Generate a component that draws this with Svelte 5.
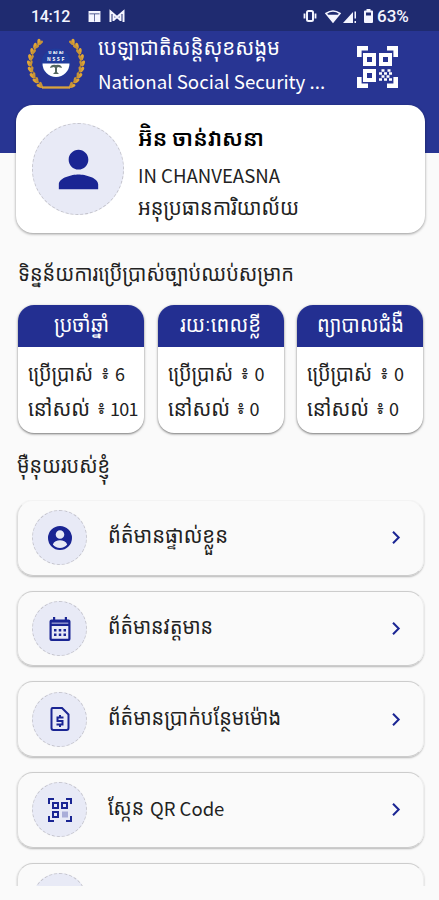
<script>
    const leave = [
        { title: 'ប្រចាំឆ្នាំ', used: 6, left: 101, width: 55 },
        { title: 'រយៈពេលខ្លី', used: 0, left: 0, width: 81 },
        { title: 'ព្យាបាលជំងឺ', used: 0, left: 0, width: 87 }
    ];

    const menu = [
        { id: 'profile', title: 'ព័ត៌មានផ្ទាល់ខ្លួន', width: 120 },
        { id: 'calendar', title: 'ព័ត៌មានវត្តមាន', width: 105 },
        { id: 'money', title: 'ព័ត៌មានប្រាក់បន្ថែមម៉ោង', width: 173 },
        { id: 'qr', title: 'ស្កែន', suffix: 'QR Code', width: 36 },
        { id: 'more', title: '' }
    ];

    // Leaves of the left half of the wreath, mirrored for the right half
    const leaves = [
        [13, 3, 25], [9, 7, 35], [6, 12, 20], [4, 18, 10], [3, 24, 0],
        [4, 30, -10], [6, 36, -20], [9, 41, -30], [13, 46, -45]
    ];
</script>

{#snippet khmer(label, width)}
    <svg class="khmer" {width} height="36"><text y="25" textLength={width} lengthAdjust="spacingAndGlyphs">{label}</text></svg>
{/snippet}

<div class="screen">
    <div class="status">
        <span class="time">14:12</span>
        <svg class="news" viewBox="0 0 13 12" fill="currentColor">
            <path fill-rule="evenodd" d="M0 0h13v12H0zM1 2.7v.8h11v-.8zM6.3 3.5v8h.7v-8z" />
        </svg>
        <svg class="mail" viewBox="0 0 16 12">
            <path d="M1.5 12V1.5L8 7l6.5-5.500V12M4.500 11V5M11.500 11V5M4.500 10 8 7l3.500 3" fill="none" stroke="currentColor" stroke-width="2" />
        </svg>
        <span class="gap"></span>
        <svg class="vibrate" viewBox="0 0 16 12" fill="none" stroke="currentColor" stroke-width="2">
            <rect x="5" y="1" width="6" height="10" rx="1.5" />
            <path d="M2.500 3.500v5M13.500 3.500v5" stroke-width="1.800" />
        </svg>
        <svg class="wifi" viewBox="0 0 16 13" fill="none" stroke="currentColor" stroke-width="1.6">
            <path d="M1 3.5Q8-1.5 15 3.5L8 12z" />
            <path d="M4 5.5h8L8 11z" fill="currentColor" />
        </svg>
        <svg class="signal" viewBox="0 0 14 13" fill="currentColor">
            <path d="M0 13 10 2v11zM11.5 1.5H13v7h-1.5zM11.5 11H13v2h-1.5z" />
        </svg>
        <svg class="battery" viewBox="0 0 9 14" fill="currentColor">
            <path fill-rule="evenodd" d="M2.500 0h4v1.500H8q1 0 1 1V13q0 1-1 1H1q-1 0-1-1V2.500q0-1 1-1h1.500zM2 3.500v3h5v-3z" />
        </svg>
        <span class="percent">63%</span>
    </div>

    <header>
        <svg class="logo" viewBox="0 0 58 52">
            {#each [1, -1] as side}
                <g transform={side === 1 ? '' : 'translate(58 0) scale(-1 1)'}>
                    <path d="M13 3Q-6 24 16 49" fill="none" stroke="#a87c2c" stroke-width="1.3" />
                    {#each leaves as [x, y, turn]}
                        <g transform="translate({x} {y}) rotate({turn})">
                            <ellipse cx="-1" rx="1.7" ry="3.2" transform="rotate(-25)" fill="#e0a535" />
                            <ellipse cx="1" rx="1.4" ry="2.9" transform="rotate(25)" fill="#c79337" />
                        </g>
                    {/each}
                </g>
            {/each}
            <path d="M15 48.5h28" stroke="#d9a33c" stroke-width="2.3" />
            <circle cx="29" cy="24" r="14.5" fill="#203c9c" />
            <path d="M15.5 24.5h27a13.5 13.5 0 0 1-27 0z" fill="#fff" />
            <path d="M23 29q1-4 6-3 5-1 6 3l-4-1-1 1v4l2 2h-6l2-2v-4l-1-1z" fill="#53665e" />
            <text x="29" y="15" text-anchor="middle">ប ស ស</text>
            <text x="29.5" y="22" text-anchor="middle" letter-spacing="1.5">NSSF</text>
        </svg>
        <div class="org">
            {@render khmer('បេឡាជាតិសន្តិសុខសង្គម', 182)}
            <div class="org-en">National Social Security ...</div>
        </div>
        <svg class="scan" viewBox="0 0 41 42" fill="none" stroke="currentColor" stroke-width="4">
            <path d="M2.3 11V2.3H11M30 2.3h8.7V11M2.3 31v8.7H11M30 39.7h8.7V31" stroke-width="4.6" />
            <path d="M8 9h9v9H8zM24 9h9v9h-9zM8 25h9v9H8z" stroke="#283593" stroke-width="5" />
            <path d="M8 9h9v9H8zM24 9h9v9h-9zM8 25h9v9H8z" />
            <path d="M24.500 24.500h3m3 0h3M22 27.500h3m2 0h3m2 0h3M24.500 30.500h3m2 0h3M22 33.500h3m2 0h3m2 0h3" stroke-width="2.600" />
        </svg>
    </header>

    <section class="profile">
        <div class="avatar">
            <svg viewBox="0 0 24 24" fill="currentColor">
                <path d="M12 12c2.210 0 4-1.790 4-4s-1.790-4-4-4-4 1.790-4 4 1.790 4 4 4zm0 2c-2.670 0-8 1.340-8 4v2h16v-2c0-2.660-5.330-4-8-4z" />
            </svg>
        </div>
        <div class="who">
            <div class="name">{@render khmer('អ៊\u200Cិន ចាន់វាសនា', 126)}</div>
            <div class="latin">IN CHANVEASNA</div>
            {@render khmer('អនុប្រធានការិយាល័យ', 161)}
        </div>
    </section>

    <h2>{@render khmer('ទិន្នន័យការប្រើប្រាស់ច្បាប់ឈប់សម្រាក', 276)}</h2>

    <div class="cards">
        {#each leave as item}
            <div class="card">
                <div class="card-head">{@render khmer(item.title, item.width)}</div>
                <div class="line">{@render khmer('ប្រើប្រាស់', 65)}<span class="mark">៖</span>{item.used}</div>
                <div class="line">{@render khmer('នៅសល់', 62)}<span class="mark">៖</span>{item.left}</div>
            </div>
        {/each}
    </div>

    <h2 class="menu-title">{@render khmer('ម៉ឺនុយរបស់ខ្ញុំ', 93)}</h2>

    <div class="menu">
        {#each menu as item, i}
            <div class="row" class:first={i === 0}>
                <div class="icon">
                    {#if item.id === 'profile'}
                        <svg viewBox="0 0 24 24" fill="currentColor">
                            <path fill-rule="evenodd" d="M12 0a12 12 0 1 0 0 24 12 12 0 0 0 0-24zm0 4.200a4.300 4.300 0 1 1 0 8.600 4.300 4.300 0 0 1 0-8.600zM4.800 18.500c1-2.800 4.300-4.200 7.200-4.200s6.200 1.400 7.200 4.200C17.500 20.800 15 22 12 22s-5.500-1.200-7.200-3.500z" />
                        </svg>
                    {:else if item.id === 'calendar'}
                        <svg viewBox="0 0 24 24" fill="currentColor">
                            <path fill-rule="evenodd" d="M5 0h2.200v2.500h9.600V0H19v2.500h1.500q2 0 2 2V22q0 2-2 2h-17q-2 0-2-2V4.500q0-2 2-2H5zM3.700 9v12.700h16.600V9z" />
                            <path d="M6 12h2.500v2.500H6zM10.750 12h2.500v2.500h-2.500zM15.500 12H18v2.500h-2.500zM6 16.500h2.500V19H6zM10.750 16.500h2.500V19h-2.500zM15.500 16.500H18V19h-2.500z" />
                            <path d="M3.700 6.200h16.600" stroke="#8c91cc" stroke-width="1.5" />
                        </svg>
                    {:else if item.id === 'money'}
                        <svg viewBox="0 0 24 24" fill="none" stroke="currentColor" stroke-width="2">
                            <path d="M4.500 1H14l6.500 6.500V21q0 2-2 2h-13q-2 0-2-2V3q0-2 1-2z" />
                            <path d="M15.500 10.500h-6v3.400h5V17.500H8.500M12 8v2.500M12 17.500V20" />
                        </svg>
                    {:else if item.id === 'qr'}
                        <svg viewBox="0 0 24 24" fill="none" stroke="currentColor" stroke-width="2">
                            <path d="M1 6V1h5M18 1h5v5M1 18v5h5M18 23h5v-5M5 5h5v5H5zM14 5h5v5h-5zM5 14h5v5H5z" />
                            <path d="M14 15h6M14 18h6" stroke-width="3" opacity=".3" />
                        </svg>
                    {/if}
                </div>
                {#if item.title}
                    <div class="label">{@render khmer(item.title, item.width)}<span>{item.suffix}</span></div>
                {/if}
                <svg class="chevron" viewBox="0 0 8 13" fill="none" stroke="currentColor" stroke-width="2">
                    <path d="M1 .7l5.7 5.8L1 12.3" />
                </svg>
            </div>
        {/each}
    </div>
</div>

<style>
    :global(body) {
        background: #fafafa;
    }

    .screen {
        box-sizing: border-box;
        height: 900px;
        overflow: hidden;
        color: #222;
        background: linear-gradient(#283593 153px, #fafafa 153px);
        font-family: "Noto Sans CJK SC", "Noto Sans Khmer", "Khmer OS", "DejaVu Sans", sans-serif;
        font-size: 19px;
    }

    svg {
        display: block;
        flex: none;
        overflow: visible;
    }

    text {
        fill: currentColor;
    }

    .khmer {
        font-size: 22px;
    }

    .status {
        display: flex;
        align-items: center;
        box-sizing: border-box;
        height: 31px;
        padding: 1px 28px 0 31px;
        background: #1f2b70;
        color: #f4f5ff;
        font-family: Roboto, sans-serif;
        font-size: 16px;
        font-weight: 500;
    }

    .time { width: 57px; letter-spacing: -0.3px; }
    .news { width: 13px; height: 11px; }
    .mail { width: 16px; height: 12px; margin-left: 8px; }
    .gap { flex: 1; }
    .vibrate { width: 16px; height: 12px; margin-right: 7px; }
    .wifi { width: 16px; height: 13px; margin-right: 2px; }
    .signal { width: 14px; height: 13px; margin-right: 7px; }
    .battery { width: 9px; height: 14px; margin-right: 4px; }
    .percent { width: 34px; font-size: 17px; }

    header {
        display: flex;
        height: 74px;
        padding-left: 27px;
        color: #fff;
    }

    .logo {
        width: 58px;
        height: 52px;
        margin-top: 8px;
        font-size: 5px;
        font-weight: 700;
    }

    .org {
        width: 227px;
        margin-left: 13px;
    }

    .org .khmer {
        margin-top: -1px;
    }

    .org-en {
        line-height: 29px;
        font-size: 18.7px;
        white-space: nowrap;
    }

    .scan {
        width: 41px;
        height: 42px;
        margin: 15px 0 0 32px;
    }

    .profile {
        display: flex;
        box-sizing: border-box;
        height: 128px;
        margin: 0 14px 0 16px;
        padding: 18px 16px;
        border-radius: 17px;
        background: #fff;
        box-shadow: 0 1px 3px rgba(0, 0, 0, 0.4);
    }

    .avatar, .icon {
        display: grid;
        place-items: center;
        box-sizing: border-box;
        flex: none;
        border: 1px dashed #c5c5ce;
        border-radius: 50%;
        background: #e8eaf6;
        color: #1a2593;
    }

    .avatar {
        width: 92px;
        height: 92px;
    }

    .avatar svg {
        width: 59px;
        height: 59px;
    }

    .who {
        margin: -2px 0 0 14px;
    }

    .name {
        height: 37px;
        color: #000;
        font-weight: 600;
    }

    .latin {
        height: 32px;
        line-height: 33px;
        font-size: 18.6px;
    }

    h2 {
        height: 40px;
        margin: 23px 0 9px 18px;
        font-size: 20px;
        font-weight: 400;
    }

    .cards {
        display: grid;
        grid-template-columns: repeat(3, 126px);
        gap: 13.5px;
        margin-left: 18px;
    }

    .card {
        box-sizing: border-box;
        height: 128px;
        border-radius: 16px;
        background: #fff;
        box-shadow: 0 1px 2.5px rgba(0, 0, 0, 0.55);
        overflow: hidden;
    }

    .card-head {
        display: flex;
        justify-content: center;
        height: 42px;
        margin-bottom: 9px;
        padding-top: 2px;
        box-sizing: border-box;
        background: #232f91;
        color: #fff;
    }

    .line {
        display: flex;
        height: 35px;
        padding-left: 10px;
        font-size: 18px;
        letter-spacing: -0.8px;
        line-height: 34px;
    }

    .line .khmer {
        letter-spacing: 0;
    }

    .mark {
        width: 7px;
        margin: -2px 7px 0 8px;
        text-align: center;
    }

    .card .line:last-child .mark {
        margin-right: 6px;
        margin-left: 7px;
    }

    .menu-title {
        height: 44px;
        margin: 15px 0 8px 17px;
    }

    .menu {
        display: flex;
        flex-direction: column;
        gap: 15px;
        height: 386px;
        padding: 0 15px 0 17px;
        overflow: hidden;
    }

    .row {
        display: flex;
        align-items: center;
        box-sizing: border-box;
        flex: none;
        height: 75.7px;
        padding: 0 23px 0 14px;
        border: 1px solid #ccc;
        border-right-color: #eee;
        border-left-color: #ddd;
        border-radius: 16px;
        box-shadow: 0 1px 2px rgba(0, 0, 0, 0.28);
    }

    .row.first {
        border-top-color: #f3f3f3;
    }

    .icon {
        width: 55px;
        height: 55px;
    }

    .icon svg {
        width: 24px;
        height: 24px;
    }

    .label {
        display: flex;
        width: 173px;
        margin: -3px 0 0 21px;
    }

    .label span {
        margin-left: 6px;
        line-height: 37px;
        white-space: nowrap;
        font-size: 18.5px;
    }

    .chevron {
        width: 8px;
        height: 13px;
        margin-left: auto;
        color: #1a2593;
    }
</style>
